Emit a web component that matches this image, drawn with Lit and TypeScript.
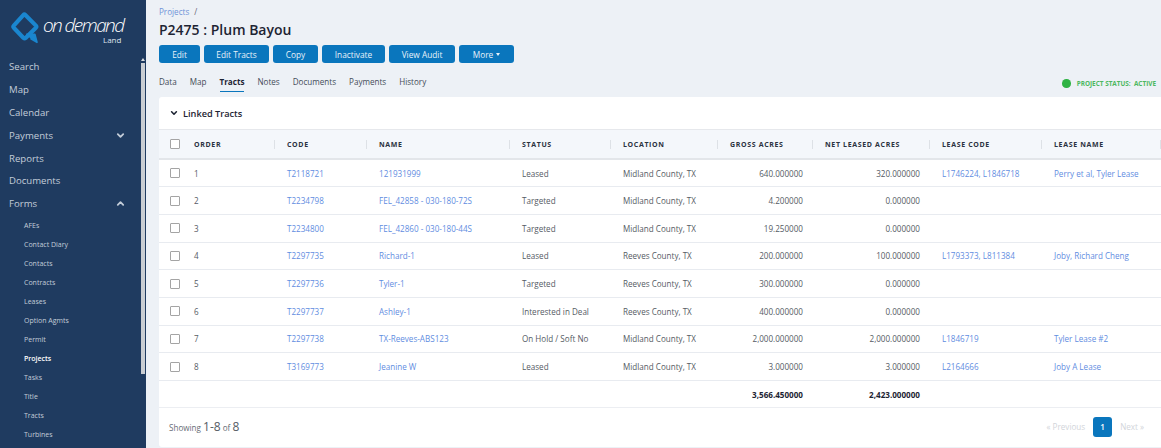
import { LitElement, html, css, svg } from 'lit';
import { customElement } from 'lit/decorators.js';

const chevron = (up: boolean, size = 9) => html`<svg width="${size}" height="${size}" viewBox="0 0 10 10" fill="none" stroke="currentColor" stroke-width="2" stroke-linecap="round" stroke-linejoin="round">
  ${up ? svg`<path d="M2 6.500 5 3.500 8 6.500"/>` : svg`<path d="M2 3.500 5 6.500 8 3.500"/>`}
</svg>`;

const rows = [
  ['1', 'T2118721', '121931999', 'Leased', 'Midland County, TX', '640.000000', '320.000000', 'L1746224, L1846718', 'Perry et al, Tyler Lease'],
  ['2', 'T2234798', 'FEL_42858 - 030-180-72S', 'Targeted', 'Midland County, TX', '4.200000', '0.000000', '', ''],
  ['3', 'T2234800', 'FEL_42860 - 030-180-44S', 'Targeted', 'Midland County, TX', '19.250000', '0.000000', '', ''],
  ['4', 'T2297735', 'Richard-1', 'Leased', 'Reeves County, TX', '200.000000', '100.000000', 'L1793373, L811384', 'Joby, Richard Cheng'],
  ['5', 'T2297736', 'Tyler-1', 'Targeted', 'Reeves County, TX', '300.000000', '0.000000', '', ''],
  ['6', 'T2297737', 'Ashley-1', 'Interested in Deal', 'Reeves County, TX', '400.000000', '0.000000', '', ''],
  ['7', 'T2297738', 'TX-Reeves-ABS123', 'On Hold / Soft No', 'Midland County, TX', '2,000.000000', '2,000.000000', 'L1846719', 'Tyler Lease #2'],
  ['8', 'T3169773', 'Jeanine W', 'Leased', 'Midland County, TX', '3.000000', '3.000000', 'L2164666', 'Joby A Lease'],
];

const forms = ['AFEs', 'Contact Diary', 'Contacts', 'Contracts', 'Leases', 'Option Agmts', 'Permit', 'Projects', 'Tasks', 'Title', 'Tracts', 'Turbines'];

@customElement('app-root')
export class AppRoot extends LitElement {
  static styles = css`
    :host {
      display: flex;
      width: 1161px;
      height: 448px;
      overflow: hidden;
      background: #edf1f6;
      color: #333;
      font-family: "Open Sans", sans-serif;
      font-size: 8.1px;
    }

    .side {
      position: relative;
      flex: none;
      width: 146px;
      background: #1f3b60;
      color: #c3cdd9;
      overflow: hidden;
    }
    .logo { display: block; margin: 12px 0 0 11px; height: 34px; }
    .logo-text { font-family: "Open Sans", sans-serif; }
    .menu { margin-top: 9.5px; }
    .item {
      display: flex;
      justify-content: space-between;
      align-items: center;
      height: 22.8px;
      padding: 0 21px 0 9px;
      font-size: 9.6px;
    }
    .subs { padding-top: 1px; }
    .sub {
      height: 19px;
      line-height: 19px;
      padding-left: 24px;
      font-size: 7px;
    }
    .sub.on { color: #fff; font-weight: 600; }
    .thumb {
      position: absolute;
      left: 141px;
      top: 63px;
      width: 4px;
      height: 311px;
      background: #c9cdd2;
    }
    .arrow {
      position: absolute;
      left: 141px;
      top: 58px;
      width: 0;
      height: 0;
      border: 2px solid transparent;
      border-top: 0;
      border-bottom: 3px solid #d8dce0;
    }

    .main {
      flex: 1;
      min-width: 0;
      padding-left: 13px;
    }
    .crumb {
      padding-top: 6px;
      height: 21px;
      line-height: 11px;
      box-sizing: border-box;
      font-size: 8.1px;
      color: #6f93d8;
    }
    .crumb span { color: #667; margin-left: 3px; }
    h1 {
      margin: 0;
      height: 18px;
      line-height: 18px;
      font-size: 14px;
      font-weight: 600;
      color: #1d2433;
    }
    .btns { display: flex; gap: 4px; margin-top: 6px; }
    .btn {
      display: flex;
      align-items: center;
      justify-content: center;
      gap: 3px;
      height: 18px;
      border-radius: 3px;
      background: #0a76bd;
      color: #e8f2f9;
      font-size: 8.3px;
    }
    .caret {
      width: 0;
      height: 0;
      border: 2.5px solid transparent;
      border-bottom: 0;
      border-top: 3px solid #e8f2f9;
    }
    .tabbar {
      display: flex;
      justify-content: space-between;
      align-items: flex-start;
      height: 24px;
      margin-top: 10px;
    }
    .tabs { display: flex; gap: 13px; }
    .tab {
      height: 19px;
      line-height: 18px;
      font-size: 8.1px;
      color: #444c58;
    }
    .tab.on {
      color: #1d2433;
      font-weight: 700;
      border-bottom: 1px solid #0a76bd;
      box-sizing: border-box;
    }
    .state {
      display: flex;
      align-items: center;
      gap: 6px;
      padding: 6px 5px 0 0;
      font-size: 6.4px;
      font-weight: 700;
      color: #4cb860;
    }
    .dot { width: 8.5px; height: 8.5px; border-radius: 50%; background: #2fb344; }

    .card {
      background: #fff;
      border-radius: 3px 0 0 3px;
      height: 350px;
    }
    .card-head {
      display: flex;
      align-items: center;
      gap: 5px;
      height: 32px;
      padding-left: 11px;
      box-sizing: border-box;
      font-size: 9.2px;
      font-weight: 600;
      color: #1d2433;
    }
    .card-head svg { color: #1d2433; }

    table {
      table-layout: fixed;
      border-collapse: collapse;
      width: 1002px;
    }
    th {
      position: relative;
      height: 28px;
      padding: 0 0 0 12px;
      background: #f4f7fb;
      border-top: 1px solid #e6e8ec;
      border-bottom: 2px solid #e3e6ea;
      text-align: left;
      font-size: 7px;
      font-weight: 700;
      letter-spacing: .65px;
      color: #2b3240;
      white-space: nowrap;
    }
    th.sep::after {
      content: "";
      position: absolute;
      right: 0;
      top: 10px;
      height: 9px;
      width: 1px;
      background: #dde1e6;
    }
    td {
      height: 27.7px;
      padding: 0 0 0 12px;
      box-sizing: border-box;
      border-bottom: 1px solid #e8ebf0;
      color: #555b64;
      white-space: nowrap;
      overflow: hidden;
    }
    th.box, td.box { padding-left: 11px; }
    th.first, td.first { padding-left: 11px; }
    td.num { text-align: right; padding-right: 10px; }
    a { color: #5f8ddf; text-decoration: none; }
    .check {
      display: block;
      width: 8px;
      height: 8px;
      border: 1px solid #a4a4a4;
      border-radius: 1px;
      background: #fff;
    }
    tr.total td {
      height: 27px;
      border-top: 1px solid #dcdfe3;
      border-bottom: 1px solid #eceef2;
      color: #1d2433;
      font-weight: 700;
    }

    .foot {
      display: flex;
      justify-content: space-between;
      align-items: center;
      height: 37px;
      padding: 0 17px 2px 10px;
      color: #666c75;
    }
    .showing b { font-weight: 400; font-size: 12px; color: #555b64; }
    .pager { display: flex; align-items: center; gap: 8px; color: #d2d5da; }
    .page {
      width: 19px;
      height: 20px;
      line-height: 20px;
      text-align: center;
      border-radius: 3px;
      background: #0a76bd;
      color: #fff;
      font-weight: 600;
    }
  `;

  render() {
    const head = ['ORDER', 'CODE', 'NAME', 'STATUS', 'LOCATION', 'GROSS ACRES', 'NET LEASED ACRES', 'LEASE CODE', 'LEASE NAME'];
    const widths = [24, 92, 92, 143, 101, 107, 95, 117, 112, 119];
    return html`
      <nav class="side">
        <svg class="logo" width="120" height="34" viewBox="0 0 120 34">
          <g transform="translate(-1 -1) scale(1.08)">
            <path d="M14 3.500 24 13.500a1.500 1.500 0 0 1 0 2L14.500 25a1.500 1.500 0 0 1-2 0L3.500 15.500a1.500 1.500 0 0 1 0-2L12.500 3.500a1 1 0 0 1 1.500 0Z" fill="none" stroke="#1a86cf" stroke-width="3.800" stroke-linejoin="round" />
            <path d="M15 21.500h8l2 7.500-6-3.500" fill="#1a86cf" stroke="#1a86cf" stroke-width="1.500" stroke-linejoin="round" />
          </g>
          <text class="logo-text" x="32" y="19.500" font-size="19" font-weight="300" font-style="italic" fill="#fff" textLength="82">on demand</text>
          <text class="logo-text" x="92" y="30.500" font-size="8" fill="#dfe6ee">Land</text>
        </svg>
        <div class="menu">
          <div class="item">Search</div>
          <div class="item">Map</div>
          <div class="item">Calendar</div>
          <div class="item">Payments ${chevron(false)}</div>
          <div class="item">Reports</div>
          <div class="item">Documents</div>
          <div class="item">Forms ${chevron(true)}</div>
          <div class="subs">
            ${forms.map((f) => html`<div class="sub ${f === 'Projects' ? 'on' : ''}">${f}</div>`)}
          </div>
        </div>
        <div class="arrow"></div>
        <div class="thumb"></div>
      </nav>

      <div class="main">
        <div class="crumb">Projects <span>/</span></div>
        <h1>P2475 : Plum Bayou</h1>
        <div class="btns">
          <div class="btn" style="width:41px">Edit</div>
          <div class="btn" style="width:65px">Edit Tracts</div>
          <div class="btn" style="width:45px">Copy</div>
          <div class="btn" style="width:63px">Inactivate</div>
          <div class="btn" style="width:66px">View Audit</div>
          <div class="btn" style="width:55px">More <i class="caret"></i></div>
        </div>
        <div class="tabbar">
          <div class="tabs">
            <div class="tab">Data</div>
            <div class="tab">Map</div>
            <div class="tab on">Tracts</div>
            <div class="tab">Notes</div>
            <div class="tab">Documents</div>
            <div class="tab">Payments</div>
            <div class="tab">History</div>
          </div>
          <div class="state"><i class="dot"></i><span>PROJECT STATUS:&nbsp; ACTIVE</span></div>
        </div>

        <div class="card">
          <div class="card-head">${chevron(false, 8)} Linked Tracts</div>
          <table>
            <colgroup>${widths.map((w) => html`<col style="width:${w}px" />`)}</colgroup>
            <thead>
              <tr>
                <th class="box"><i class="check"></i></th>
                ${head.map((h, i) => html`<th class="sep ${i === 0 ? 'first' : ''}">${h}</th>`)}
              </tr>
            </thead>
            <tbody>
              ${rows.map((r) => html`
                <tr>
                  <td class="box"><i class="check"></i></td>
                  <td class="first">${r[0]}</td>
                  <td><a>${r[1]}</a></td>
                  <td><a>${r[2]}</a></td>
                  <td>${r[3]}</td>
                  <td>${r[4]}</td>
                  <td class="num">${r[5]}</td>
                  <td class="num">${r[6]}</td>
                  <td><a>${r[7]}</a></td>
                  <td><a>${r[8]}</a></td>
                </tr>`)}
              <tr class="total">
                <td></td><td></td><td></td><td></td><td></td><td></td>
                <td class="num">3,566.450000</td>
                <td class="num">2,423.000000</td>
                <td></td><td></td>
              </tr>
            </tbody>
          </table>
          <div class="foot">
            <div class="showing">Showing <b>1-8</b> of <b>8</b></div>
            <div class="pager"><span>« Previous</span><div class="page">1</div><span>Next »</span></div>
          </div>
        </div>
      </div>
    `;
  }
}
